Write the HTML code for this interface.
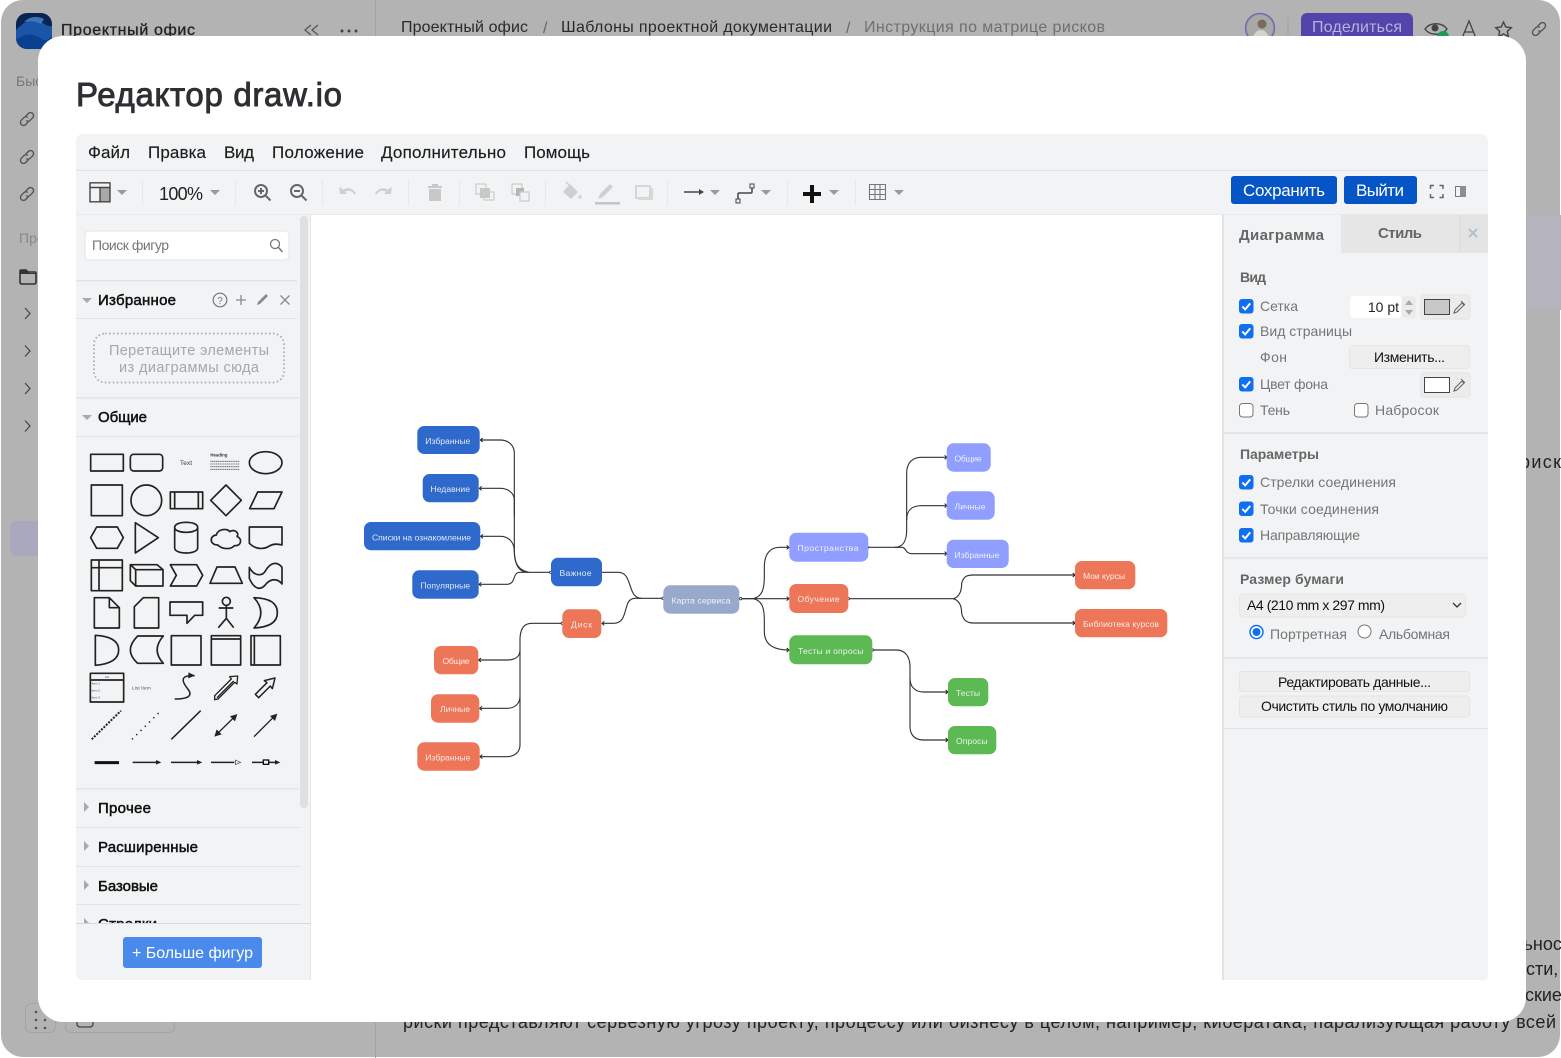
<!DOCTYPE html>
<html><head><meta charset="utf-8"><title>Редактор draw.io</title>
<style>
html,body{margin:0;padding:0;background:#fff;width:1561px;height:1058px;overflow:hidden}
svg{display:block;font-family:"Liberation Sans",sans-serif}
.mn{font-size:17px;fill:#1c1c1c;stroke:#1c1c1c;stroke-width:.15}
.hd{font-size:15px;fill:#111;stroke:#111;stroke-width:.5}
.lb{font-size:14px;fill:#757575}
.st{font-size:14px;fill:#666;font-weight:bold}
.bt{font-size:14px;fill:#111;text-anchor:middle}
.nd{font-size:8.6px;fill:#fff;fill-opacity:.85}
.bg{font-size:18px;fill:#222}
.ca{fill:#9a9a9a}
.sh{fill:none;stroke:#222;stroke-width:5;stroke-linejoin:round}
.ed{fill:none;stroke:#333;stroke-width:3.4}
</style></head><body>
<svg width="1561" height="1058" viewBox="0 0 1561 1058" xmlns="http://www.w3.org/2000/svg">
<defs>
<g id="cb"><rect width="14.5" height="14.5" rx="3" fill="#106ff0"/><path d="M3.3 7.4l2.9 3 5-6" fill="none" stroke="#fff" stroke-width="2"/></g>
<g id="cu"><rect x=".5" y=".5" width="13.5" height="13.5" rx="3" fill="#fff" stroke="#777"/></g>
<g id="lk" fill="none" stroke="#555" stroke-width="1.4"><path d="M-1.5 -2.5l2.8-3a3 3 0 0 1 4.4 4.2l-2.5 2.6a3 3 0 0 1-4 .2"/><path d="M1.5 2.5l-2.8 3a3 3 0 0 1-4.4-4.2l2.5-2.6a3 3 0 0 1 4-.2"/></g>
<marker id="ar" markerUnits="userSpaceOnUse" markerWidth="14" markerHeight="18" refX="11" refY="9" orient="auto"><path d="M4 3l7 6-7 6" fill="none" stroke="#222" stroke-width="3"/></marker>
<marker id="ab" markerUnits="userSpaceOnUse" markerWidth="26" markerHeight="26" refX="22" refY="13" orient="auto"><path d="M3 4l20 9-20 9z" fill="#222"/></marker>
<clipPath id="sc"><rect x="76" y="215" width="234" height="708"/></clipPath>
<clipPath id="lg"><rect x="16" y="13" width="36" height="36" rx="11"/></clipPath>
<clipPath id="av"><circle cx="1260" cy="28" r="13"/></clipPath>
</defs>

<!-- backdrop -->
<rect x="1" y="0" width="1559" height="1057" rx="22" fill="#b3b3b3"/>
<path d="M1526 215h35v95h-35z" fill="#b5b4bd"/>
<line x1="375.500" y1="0" x2="375.500" y2="1058" stroke="#a2a2a2"/>
<g clip-path="url(#lg)"><rect x="16" y="13" width="36" height="36" fill="#0a2450"/><path d="M16 30c8-8 14-12 22-9s10 6 14 5v23H16z" fill="#1a55a6"/><path d="M16 40c10-8 18-6 24-2s8 2 12-2v13H16z" fill="#0b3f90"/><path d="M24 22c6-6 14-6 20-3l-3 5c-6-3-11-3-17-2z" fill="#3a76ba"/></g>
<text x="61" y="35" font-size="16" fill="#222" stroke="#222" stroke-width=".3" textLength="134">Проектный офис</text>
<path d="M311 25l-6 5 6 5M318 25l-6 5 6 5" fill="none" stroke="#555" stroke-width="1.300"/>
<g fill="#444"><circle cx="342" cy="31" r="1.500"/><circle cx="349" cy="31" r="1.500"/><circle cx="356" cy="31" r="1.500"/></g>
<g font-size="16"><text x="401" y="32" fill="#2a2a2a" textLength="127">Проектный офис</text><text x="543" y="33" fill="#666">/</text><text x="561" y="32" fill="#2a2a2a" textLength="271">Шаблоны проектной документации</text><text x="846" y="33" fill="#666">/</text><text x="864" y="32" fill="#6f6f6f" textLength="241">Инструкция по матрице рисков</text></g>
<circle cx="1260" cy="28" r="14.500" fill="#9a9aa8" stroke="#6d65ad" stroke-width="1.300"/>
<g clip-path="url(#av)"><rect x="1245" y="13" width="30" height="30" fill="#a8a8a4"/><circle cx="1262" cy="24" r="4.500" fill="#7a6a5e"/><path d="M1252 42c1-9 5-12 9-12s8 4 9 12z" fill="#d5d2cc"/></g>
<line x1="1288" y1="17" x2="1288" y2="36" stroke="#a6a6a6" stroke-width="1.500"/>
<rect x="1301" y="13" width="112" height="30" rx="6" fill="#5145ab"/>
<text x="1312" y="32" font-size="16" fill="#b6b3dc" textLength="90">Поделиться</text>
<path d="M1425 29c5-7 17-7 22 0-5 7-17 7-22 0z" fill="none" stroke="#444" stroke-width="1.400"/><circle cx="1435" cy="28" r="3.500" fill="#444"/><circle cx="1443" cy="37" r="6" fill="#1f9a57"/>
<path d="M1462.500 37l6.500-16 6.500 16M1465 32h8" fill="none" stroke="#444" stroke-width="1.300"/>
<path d="M1503.500 22l2.300 5 5.500.6-4 3.700 1.100 5.300-4.900-2.700-4.900 2.700 1.100-5.300-4-3.700 5.500-.6z" fill="none" stroke="#444" stroke-width="1.400"/>
<use href="#lk" x="1539" y="29"/>

<text x="16" y="86" font-size="14" fill="#777">Быстрые</text>
<use href="#lk" x="27" y="119"/><use href="#lk" x="27" y="157"/><use href="#lk" x="27" y="194"/>
<text x="19" y="243" font-size="14" fill="#888">Проекты</text>
<path d="M21 270h5l2 2h7q1 0 1 1v9q0 2-2 2H22q-2 0-2-2v-11q0-1 1-1z" fill="none" stroke="#333" stroke-width="1.600"/><path d="M20 270h7l2 3h7v1H20z" fill="#333"/>
<path d="M25 308l5 5.500-5 5.500M25 345.500l5 5.500-5 5.500M25 383l5 5.500-5 5.500M25 420.500l5 5.500-5 5.500" fill="none" stroke="#444" stroke-width="1.200"/>
<rect x="10" y="521" width="40" height="35" rx="6" fill="#a9a8bd"/>
<rect x="25.500" y="1003.500" width="30" height="29" rx="6" fill="none" stroke="#a4a4a4"/>
<g fill="#555"><circle cx="36" cy="1012" r="1.300"/><circle cx="45" cy="1012" r="1.300"/><circle cx="36" cy="1020" r="1.300"/><circle cx="45" cy="1020" r="1.300"/><circle cx="36" cy="1028" r="1.300"/><circle cx="45" cy="1028" r="1.300"/></g>
<rect x="65.500" y="1003.500" width="109" height="29" rx="6" fill="none" stroke="#a4a4a4"/>
<rect x="77" y="1012" width="16" height="15" rx="3" fill="none" stroke="#444" stroke-width="1.300"/>
<text x="1520" y="468" class="bg" textLength="41">риск</text>
<text x="1513" y="950" class="bg">льнос</text>
<text x="1526" y="975" class="bg">сти, в</text>
<text x="1525" y="1001" class="bg">ские</text>
<text x="403" y="1028" class="bg" textLength="1153">риски представляют серьезную угрозу проекту, процессу или бизнесу в целом, например, кибератака, парализующая работу всей</text>

<!-- modal -->
<rect x="38" y="36" width="1488" height="986" rx="25" fill="#fff"/>
<text x="76" y="106" font-size="33" fill="#2e2f33" stroke="#2e2f33" stroke-width=".9" textLength="266">Редактор draw.io</text>

<!-- editor -->
<path d="M84 134H1480q8 0 8 8V975q0 5-5 5H84q-8 0-8-8V142q0-8 8-8z" fill="#f1f3f4"/>
<rect x="311" y="215" width="912" height="765" fill="#fff"/>
<rect x="76" y="170" width="1412" height="1" fill="#e1e2e3"/>
<rect x="76" y="214" width="1412" height="1" fill="#e8e9ea"/>
<rect x="310" y="215" width="1" height="765" fill="#e6e6e6"/>
<rect x="1222" y="215" width="2" height="765" fill="#e2e3e4"/>
<g class="mn"><text x="88" y="158" textLength="42">Файл</text><text x="148" y="158" textLength="58">Правка</text><text x="224" y="158" textLength="30">Вид</text><text x="272" y="158" textLength="92">Положение</text><text x="381" y="158" textLength="125">Дополнительно</text><text x="524" y="158" textLength="66">Помощь</text></g>

<!-- toolbar -->
<g fill="#e7e8e9"><rect x="142" y="180" width="1" height="26"/><rect x="235" y="180" width="1" height="26"/><rect x="322" y="180" width="1" height="26"/><rect x="408" y="180" width="1" height="26"/><rect x="459" y="180" width="1" height="26"/><rect x="545" y="180" width="1" height="26"/><rect x="667" y="180" width="1" height="26"/><rect x="787" y="180" width="1" height="26"/><rect x="855" y="180" width="1" height="26"/></g>
<rect x="100" y="187" width="10" height="15" fill="#a9a9a9"/>
<path d="M90 182.800h20v19h-20zM90 187.500h20M100 187.500v14" fill="none" stroke="#444" stroke-width="1.400"/>
<g class="ca"><path d="M117 190h10l-5 5zM210 190h10l-5 5zM710 190h10l-5 5zM761 190h10l-5 5zM829 190h10l-5 5zM894 190h10l-5 5z"/></g>
<text x="159" y="200" font-size="18" fill="#222" textLength="44">100%</text>
<g fill="none" stroke="#666" stroke-width="2"><circle cx="261" cy="191" r="6"/><path d="M265.500 195.500l5 5M258 191h6M261 188v6"/><circle cx="297" cy="191" r="6"/><path d="M301.500 195.500l5 5M294 191h6"/></g>
<path d="M339 187l1 7h7l-2.200-2.200c4-2 7-1 9.700 2.700l1.500-1c-3-5-8-6.700-12.500-3.800z" fill="#cfcfcf"/>
<path d="M392 187l-1 7h-7l2.200-2.200c-4-2-7-1-9.700 2.700l-1.500-1c3-5 8-6.700 12.500-3.800z" fill="#cfcfcf"/>
<path d="M428 186h14v2h-14zM432 184h6v2h-6zM429 189h12v12h-12z" fill="#c8c8c8"/>
<g><rect x="476" y="184" width="10" height="10" fill="none" stroke="#ccc" stroke-width="1.200"/><rect x="480" y="188" width="10" height="10" fill="#c8c8c8"/><rect x="484" y="192" width="10" height="8" fill="none" stroke="#ccc" stroke-width="1.200"/><rect x="512" y="184" width="10" height="10" fill="none" stroke="#ccc" stroke-width="1.200"/><rect x="516" y="188" width="8" height="8" fill="#b5b5b5"/><rect x="520" y="192" width="9" height="9" fill="#f1f3f4" stroke="#ccc" stroke-width="1.200"/></g>
<path d="M570 184l8 8-7 7-8-7z" fill="#cfcfcf"/><path d="M566 182l3 3" stroke="#cfcfcf" stroke-width="1.500"/><circle cx="580" cy="197" r="2" fill="#d8d8d8"/>
<path d="M598 199l2-5 10-10 3 3-10 10z" fill="#cfcfcf"/><rect x="595" y="202" width="25" height="2.500" fill="#c4c4c4"/>
<rect x="636" y="186" width="14" height="12" fill="none" stroke="#ccc" stroke-width="1.500"/><path d="M651 188h2v12h-15v-2h13z" fill="#d8d8d8"/>
<path d="M684 192h17" stroke="#444" stroke-width="1.500"/><path d="M699 189l5 3-5 3z" fill="#444"/>
<path d="M738 201v-7q0-1 1-1h12q1 0 1-1v-6" fill="none" stroke="#444" stroke-width="1.500"/><rect x="736" y="199" width="4" height="4" fill="#f1f3f4" stroke="#444"/><rect x="750" y="184" width="4" height="4" fill="#f1f3f4" stroke="#444"/>
<path d="M810 185h4v7h7v4h-7v7h-4v-7h-7v-4h7z" fill="#111"/>
<path d="M869.500 184.500h16v15h-16zM869.500 189.500h16M869.500 194.500h16M875 184.500v15M880 184.500v15" fill="none" stroke="#777" stroke-width="1.100"/>
<rect x="1231" y="176" width="106" height="28" rx="3" fill="#0655c7"/>
<rect x="1344" y="176" width="73" height="28" rx="3" fill="#0655c7"/>
<text x="1243" y="196" font-size="17" fill="#fff" textLength="82">Сохранить</text>
<text x="1356" y="196" font-size="17" fill="#fff" textLength="48">Выйти</text>
<path d="M1430.500 189v-3.500h3.500M1439.500 185.500h3.500v3.500M1443 194v3.500h-3.500M1434 197.500h-3.500V194" fill="none" stroke="#666" stroke-width="1.500"/>
<rect x="1455.500" y="186.500" width="10" height="10" fill="#f1f3f4" stroke="#777"/><rect x="1460" y="186" width="6" height="11" fill="#8e8e8e"/>

<!-- left sidebar -->
<g clip-path="url(#sc)">
<rect x="85" y="231" width="204" height="29" rx="4" fill="#fff" stroke="#e4e5e6"/>
<text x="92" y="250" font-size="14" fill="#777" textLength="77">Поиск фигур</text>
<circle cx="275" cy="244" r="4.500" fill="none" stroke="#777" stroke-width="1.300"/><path d="M278.500 247.500l4 4.500" stroke="#777" stroke-width="1.500"/>
<g fill="#e3e4e5"><rect x="76" y="280" width="221" height="1.500"/><rect x="76" y="318" width="221" height="1"/><rect x="76" y="397" width="223" height="1.500"/><rect x="76" y="436" width="223" height="1"/><rect x="76" y="788" width="223" height="1.500"/><rect x="76" y="827" width="225" height="1"/><rect x="76" y="866" width="225" height="1"/><rect x="76" y="904" width="225" height="1"/></g>
<path d="M82 298h10l-5 5zM82 415h10l-5 5z" fill="#aaa"/>
<path d="M84 802l5 5-5 5zM84 841l5 5-5 5zM84 880l5 5-5 5zM84 918l5 5-5 5z" fill="#aaa"/>
<text x="98" y="305" class="hd" textLength="78">Избранное</text>
<text x="98" y="422" class="hd" textLength="49">Общие</text>
<text x="98" y="813" class="hd" textLength="53">Прочее</text>
<text x="98" y="852" class="hd" textLength="100">Расширенные</text>
<text x="98" y="891" class="hd" textLength="60">Базовые</text>
<text x="98" y="929" class="hd" textLength="59">Стрелки</text>
<circle cx="220" cy="300" r="6.800" fill="none" stroke="#777" stroke-width="1.200"/><text x="220" y="304" font-size="10" fill="#777" text-anchor="middle">?</text>
<path d="M241 295v10M236 300h10M280.500 295.500l9 9M289.500 295.500l-9 9" stroke="#8a8a8a" stroke-width="1.300"/>
<path d="M257 305l1-3 8-8 2 2-8 8z" fill="#8a8a8a"/>
<rect x="94" y="333.500" width="190" height="49" rx="11" fill="none" stroke="#aaa" stroke-width="1.800" stroke-dasharray="1.500 2.500"/>
<text x="189" y="355" font-size="14.500" fill="#a7a7a7" text-anchor="middle" textLength="160">Перетащите элементы</text>
<text x="189" y="372" font-size="14.500" fill="#a7a7a7" text-anchor="middle" textLength="140">из диаграммы сюда</text>
</g>
<rect x="300" y="216" width="8" height="592" rx="4" fill="#dfe0e1"/>
<rect x="76" y="923" width="234" height="1" fill="#d8d9da"/>
<rect x="123" y="937" width="139" height="31" rx="3" fill="#4a8aec"/>
<text x="132" y="958" font-size="16" fill="#fff" textLength="121">+ Больше фигур</text>

<!-- shapes palette -->
<g transform="translate(76 430) scale(.33333)">
<g class="sh">
<rect x="44" y="73" width="98" height="50"/><rect x="163" y="73" width="97" height="50" rx="10"/><ellipse cx="569" cy="98" rx="49" ry="33"/>
<rect x="46" y="165" width="93" height="92"/><circle cx="211" cy="211" r="46"/><path d="M283 186h97v50h-97zM296 186v50M367 186v50"/><path d="M450 165l46 46-46 46-46-46z"/><path d="M521 236l24-50h73l-24 50z"/>
<path d="M44 323l18-32h62l18 32-18 32H62z"/><path d="M178 278l69 45-69 46z"/><path d="M296 292c0-20 69-20 69 0v62c0 20-69 20-69 0zM296 292c0 20 69 20 69 0"/>
<path d="M425 345c-25 0-25-28-4-30 5-20 35-20 40-10 15-10 30 5 22 14 18 8 12 30-8 28-10 12-35 12-50-2z"/><path d="M520 291h98v54c-13-3-23-5-38 3-15 10-40 12-60-8z"/>
<path d="M46 390h93v92H46zM46 413h93M69 390v92"/><path d="M163 404h80l18 15v49h-82l-16-16zM163 404l16 15h82M179 419v49"/><path d="M283 404h79l18 32-18 32h-79l18-32z"/><path d="M402 460l21-49h54l22 49z"/><path d="M520 412C535 440 560 440 570 420C585 395 605 395 618 412V462C605 445 585 445 570 462C555 482 535 480 520 445Z"/>
<path d="M55 503h45l30 30v61H55zM100 503v30h30"/><path d="M175 530l27-27h46v91h-73z"/><path d="M282 516h98v40h-24l-23 24v-24h-51z"/><circle cx="451" cy="514" r="12"/><path d="M451 526v39M428 534h44M427 593l24-28 22 28"/><path d="M534 503q71 2 70 45 1 42-70 46 41-46 0-91z"/>
<path d="M58 616q70 4 70 44t-70 46z"/><path d="M185 618h77q-37 42 0 82h-77q-22-20-22-40t22-42z"/><rect x="286" y="617" width="89" height="88"/><path d="M406 617h88v88h-88zM406 627h88"/><path d="M525 617h88v88h-88zM535 617v88"/>
<path d="M43 730h100v86H43zM43 750h100"/>
</g>
<g class="sh" style="stroke-width:4.500">
<path d="M296 807c45 0 55-12 38-32-22-28-15-40 22-38" marker-end="url(#ab)"/>
<path d="M416 797l50-50-5-7 24-2-2 24-7-5-50 50-10 2zM423 803l50-50" stroke-width="4"/>
<path d="M538 793l35-35-8-6 32-8-8 32-6-8-35 35z"/>
<path d="M47 928L135 842" stroke-dasharray="6 4" stroke-width="6"/>
<path d="M168 928L250 847" stroke-dasharray="4 14"/>
<path d="M286 928L374 842"/>
<path d="M424 911L475 861" stroke-width="4"/><path d="M484 852l-22 7 15 15zM415 920l22-7-15-15z" fill="#222" stroke="none"/>
<path d="M534 920l60-60" stroke-width="4"/><path d="M604 851l-22 7 15 15z" fill="#222" stroke="none"/>
</g>
<path d="M56 998h73" stroke="#111" stroke-width="9"/>
<path d="M170 997h75M285 997h83M405 997h70M528 997h75" fill="none" stroke="#222" stroke-width="4.500"/>
<path d="M240 990l16 7-16 7zM363 990l16 7-16 7zM597 990l16 7-16 7z" fill="#222"/>
<path d="M478 990l16 7-16 7z" fill="#eee" stroke="#444" stroke-width="2"/>
<rect x="562" y="990" width="16" height="13" fill="#f1f3f4" stroke="#111" stroke-width="4"/>
<text x="330" y="105" font-size="20" fill="#444" text-anchor="middle">Text</text>
<text x="403" y="80" font-size="13" font-weight="bold" fill="#333">Heading</text>
<g stroke="#555" stroke-width="2.500" stroke-dasharray="4 1.500"><path d="M403 94h87M403 102h87M403 110h87M403 118h87"/></g>
<text x="93" y="744" font-size="8" fill="#333" text-anchor="middle">List</text>
<text x="47" y="764" font-size="9" fill="#444">Item 1</text><text x="47" y="785" font-size="9" fill="#444">Item 2</text><text x="47" y="806" font-size="9" fill="#444">Item 3</text>
<text x="168" y="779" font-size="15" fill="#555">List Item</text>
</g>

<!-- canvas edges -->
<g transform="translate(355 420) scale(.33333)" class="ed">
<path d="M588 457H520C490 457 478 430 478 390V100C478 75 460 60 435 60H376" marker-end="url(#ar)"/>
<path d="M478 290V240C478 220 460 205 435 205H373" marker-end="url(#ar)"/>
<path d="M520 457C490 450 478 430 478 395C478 365 460 349 435 349H377" marker-end="url(#ar)"/>
<path d="M520 457H495C470 457 485 493 455 493H372" marker-end="url(#ar)"/>
<path d="M741 457H790C835 457 815 535 860 535H925"/>
<path d="M860 535H840C800 535 825 610 775 610H741" marker-end="url(#ar)"/>
<path d="M622 610H530C505 610 495 630 495 660V690C495 710 480 720 455 720H371" marker-end="url(#ar)"/>
<path d="M495 690V830C495 850 480 865 455 865H374" marker-end="url(#ar)"/>
<path d="M495 830V975C495 995 480 1010 455 1010H375" marker-end="url(#ar)"/>
<path d="M1153 536H1195"/>
<g fill="#fff" stroke-width="2.500"><circle cx="587" cy="457" r="3.500"/><circle cx="924" cy="535" r="3.500"/><circle cx="622" cy="610" r="3.500"/><circle cx="1157" cy="536" r="3.500"/></g>
</g>
<g transform="translate(740 430) scale(.33333)" class="ed">
<path d="M0 506H147" marker-end="url(#ar)"/>
<path d="M40 506C65 500 73 480 73 440V410C73 372 90 352 120 352H147" marker-end="url(#ar)"/>
<path d="M40 506C65 512 73 530 73 570V605C73 640 95 660 147 660" marker-end="url(#ar)"/>
<path d="M385 352H465C490 352 500 330 500 300V130C500 100 515 82 545 82H621" marker-end="url(#ar)"/>
<path d="M500 270C500 240 515 227 545 227H621" marker-end="url(#ar)"/>
<path d="M465 352H485C500 352 495 371 515 371H621" marker-end="url(#ar)"/>
<path d="M325 506H640C660 500 665 480 665 460C670 440 680 435 700 435H1005" marker-end="url(#ar)"/>
<path d="M640 506C660 512 665 530 665 550C670 570 680 579 700 579H1005" marker-end="url(#ar)"/>
<path d="M397 660H470C495 660 510 680 510 710V890C510 915 525 930 550 930H624" marker-end="url(#ar)"/>
<path d="M510 745C510 770 525 786 550 786H624" marker-end="url(#ar)"/>
<g fill="#fff" stroke-width="2.500"><circle cx="2" cy="506" r="3.500"/><circle cx="382" cy="352" r="3.500"/><circle cx="325" cy="506" r="3.500"/><circle cx="397" cy="660" r="3.500"/></g>
</g>

<!-- nodes -->
<g fill="#2e69cb">
<rect x="417.300" y="426" width="62.400" height="28" rx="7"/><rect x="422.700" y="474" width="56" height="28.300" rx="7"/><rect x="364" y="522" width="116.300" height="28.300" rx="7"/><rect x="412.300" y="570.300" width="66.400" height="28.400" rx="7"/><rect x="551" y="557.700" width="51" height="28.600" rx="7"/>
</g>
<rect x="663.300" y="585.300" width="76" height="28.400" rx="7" fill="#98a9cc"/>
<g fill="#ee7658">
<rect x="562.300" y="609.300" width="39" height="28.700" rx="7"/><rect x="434" y="646" width="44.300" height="28.300" rx="7"/><rect x="431" y="694.300" width="48.300" height="28.400" rx="7"/><rect x="417.300" y="742.300" width="62.400" height="28.400" rx="7"/>
<rect x="789.300" y="584" width="59" height="29" rx="7"/><rect x="1075" y="561" width="60.300" height="28.300" rx="7"/><rect x="1075" y="609" width="92.300" height="28.300" rx="7"/>
</g>
<g fill="#8f9eff">
<rect x="789.300" y="532.700" width="79" height="29" rx="7"/><rect x="946.700" y="443.300" width="44" height="28.400" rx="7"/><rect x="946.700" y="491.300" width="48" height="28.400" rx="7"/><rect x="946.700" y="539.700" width="62" height="28.300" rx="7"/>
</g>
<g fill="#5cb953">
<rect x="789.300" y="635.300" width="83" height="29" rx="7"/><rect x="948" y="678" width="40.300" height="28.300" rx="7"/><rect x="948" y="726" width="48.300" height="28.300" rx="7"/>
</g>
<g class="nd">
<text x="425.300" y="444" textLength="45">Избранные</text><text x="430.500" y="492" textLength="39.500">Недавние</text><text x="372" y="540.500" textLength="99">Списки на ознакомление</text><text x="420.500" y="588.500" textLength="49.500">Популярные</text><text x="559.500" y="576" textLength="32">Важное</text>
<text x="671.500" y="603.500" textLength="59">Карта сервиса</text><text x="571" y="627.500" textLength="21">Диск</text><text x="442.500" y="664" textLength="27">Общие</text><text x="440" y="712" textLength="30">Личные</text><text x="425.300" y="760.500" textLength="45">Избранные</text>
<text x="797.500" y="551" textLength="61">Пространства</text><text x="797.500" y="602" textLength="42">Обучение</text><text x="798" y="654" textLength="65.500">Тесты и опросы</text>
<text x="954.500" y="461.500" textLength="27">Общие</text><text x="954.500" y="509.500" textLength="31">Личные</text><text x="954.500" y="558" textLength="45">Избранные</text>
<text x="1083" y="579" textLength="42">Мои курсы</text><text x="1083" y="627" textLength="76">Библиотека курсов</text>
<text x="956" y="696" textLength="24">Тесты</text><text x="956" y="744" textLength="31.500">Опросы</text>
</g>

<!-- right panel -->
<rect x="1341" y="215" width="119" height="38" fill="#e6e6e6"/>
<rect x="1460" y="215" width="28" height="38" fill="#e4e4e4"/>
<rect x="1459" y="215" width="1" height="38" fill="#dcdcdc"/>
<text x="1239" y="240" font-size="15" font-weight="bold" fill="#666" textLength="85">Диаграмма</text>
<text x="1378" y="238" font-size="15" font-weight="bold" fill="#666" textLength="44">Стиль</text>
<path d="M1469 229l8 8M1477 229l-8 8" stroke="#b4c0cd" stroke-width="2"/>
<text x="1240" y="282" class="st" textLength="26">Вид</text>
<use href="#cb" x="1239" y="299"/><use href="#cb" x="1239" y="324"/><use href="#cb" x="1239" y="377"/><use href="#cu" x="1239" y="403"/><use href="#cu" x="1354" y="403"/>
<text x="1260" y="311" class="lb" textLength="38">Сетка</text><text x="1260" y="336" class="lb" textLength="92">Вид страницы</text><text x="1260" y="362" class="lb" textLength="27">Фон</text><text x="1260" y="389" class="lb" textLength="68">Цвет фона</text><text x="1260" y="415" class="lb" textLength="30">Тень</text><text x="1375" y="415" class="lb" textLength="64">Набросок</text>
<rect x="1350" y="296" width="51" height="22" rx="3" fill="#fff"/>
<text x="1399" y="312" font-size="14" fill="#222" text-anchor="end">10 pt</text>
<rect x="1402" y="296" width="14" height="22" rx="3" fill="#ebebeb"/>
<path d="M1405 305l4-5 4 5zM1405 310l4 5 4-5z" fill="#a8a8a8"/>
<rect x="1421" y="295" width="49" height="24" rx="3" fill="#ececec" stroke="#e4e4e4"/>
<rect x="1424.500" y="299.500" width="25" height="15" fill="#c8c8c8" stroke="#444"/>
<path d="M1454 313l1-3 7-7 2 2-7 7zM1461 301l4 4" fill="none" stroke="#666" stroke-width="1.100"/>
<rect x="1349.500" y="345.500" width="120" height="23" rx="3" fill="#eeeeee" stroke="#e6e6e6"/>
<text x="1409.500" y="362" class="bt" textLength="71">Изменить...</text>
<rect x="1421" y="373" width="49" height="24" rx="3" fill="#ececec" stroke="#e4e4e4"/>
<rect x="1424.500" y="377.500" width="25" height="15" fill="#fff" stroke="#444"/>
<path d="M1454 391l1-3 7-7 2 2-7 7zM1461 379l4 4" fill="none" stroke="#666" stroke-width="1.100"/>
<rect x="1224" y="432" width="264" height="2" fill="#e3e4e5"/>
<text x="1240" y="459" class="st" textLength="79">Параметры</text>
<use href="#cb" x="1239" y="475"/><use href="#cb" x="1239" y="501.500"/><use href="#cb" x="1239" y="528"/>
<text x="1260" y="487" class="lb" textLength="136">Стрелки соединения</text><text x="1260" y="514" class="lb" textLength="119">Точки соединения</text><text x="1260" y="540" class="lb" textLength="100">Направляющие</text>
<rect x="1224" y="557" width="264" height="1.500" fill="#e3e4e5"/>
<text x="1240" y="584" class="st" textLength="104">Размер бумаги</text>
<rect x="1239.500" y="594" width="226" height="23" rx="4" fill="#eeeeee" stroke="#e6e6e6"/>
<text x="1247" y="610" font-size="14" fill="#111" textLength="138">A4 (210 mm x 297 mm)</text>
<path d="M1453 603l4 4 4-4" fill="none" stroke="#333" stroke-width="1.300"/>
<circle cx="1256.500" cy="632" r="6.500" fill="#fff" stroke="#106ff0" stroke-width="1.500"/><circle cx="1256.500" cy="632" r="4" fill="#106ff0"/>
<circle cx="1364.500" cy="631.500" r="6.500" fill="#fff" stroke="#777"/>
<text x="1270" y="639" class="lb" textLength="77">Портретная</text><text x="1379" y="639" class="lb" textLength="71">Альбомная</text>
<rect x="1224" y="657" width="264" height="1.500" fill="#e3e4e5"/>
<rect x="1239.500" y="671.500" width="230" height="20" rx="3" fill="#eeeeee" stroke="#e4e4e4"/>
<rect x="1239.500" y="696" width="230" height="21" rx="3" fill="#eeeeee" stroke="#e4e4e4"/>
<text x="1354.500" y="687" class="bt" textLength="153">Редактировать данные...</text>
<text x="1354.500" y="711" class="bt" textLength="187">Очистить стиль по умолчанию</text>
<rect x="1224" y="728" width="264" height="1" fill="#e3e4e5"/>
</svg>
</body></html>
